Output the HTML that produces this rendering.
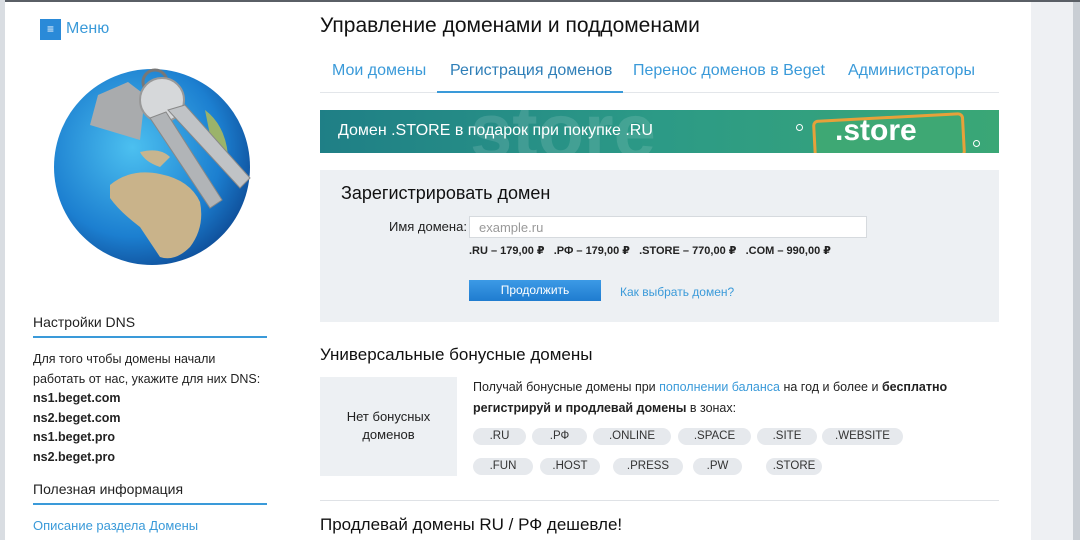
<!DOCTYPE html>
<html><head><meta charset="utf-8"><style>
*{margin:0;padding:0;box-sizing:border-box}
body{width:1080px;height:540px;overflow:hidden;background:#fff;font-family:"Liberation Sans","DejaVu Sans",sans-serif;color:#222;position:relative}
.a{position:absolute;white-space:nowrap}
.blue{color:#3a9ad9}
.tag{position:absolute;height:17px;background:#e6e9ed;border-radius:9px;font-size:11.5px;line-height:17px;text-align:center;color:#333}
</style></head><body>
<div class="a" style="left:0;top:0;width:1080px;height:2px;background:#5a5f66"></div>
<div class="a" style="left:0;top:0;width:5px;height:540px;background:#d9dde2"></div>
<div class="a" style="left:1031px;top:2px;width:42px;height:538px;background:#eef0f3"></div>
<div class="a" style="left:1073px;top:2px;width:7px;height:538px;background:#c9ced4"></div>

<div class="a" style="left:40px;top:19px;width:21px;height:21px;background:#2a8ad8;color:#fff;font-size:12px;line-height:21px;text-align:center">≡</div>
<div class="a blue" style="left:66px;top:20px;font-size:16px">Меню</div>

<svg class="a" style="left:40px;top:60px" width="230" height="215">
<defs><radialGradient id="g" cx="0.4" cy="0.4" r="0.65"><stop offset="0" stop-color="#4cc0f0"/><stop offset="0.7" stop-color="#1c7fd0"/><stop offset="1" stop-color="#0f4f9a"/></radialGradient></defs>
<circle cx="112" cy="107" r="98" fill="url(#g)"/>
<path d="M70 125 Q90 108 120 114 Q150 120 160 142 Q165 167 150 187 Q135 202 120 197 Q110 182 100 167 Q80 152 70 138Z" fill="#c9b38a"/>
<path d="M100 92 Q120 87 130 97 L120 107 Q105 102 100 92Z" fill="#c7b58f"/>
<path d="M165 50 Q185 65 188 95 L172 85Z" fill="#9bb36a"/>
<path d="M50 65 L58 35 L88 22 L105 35 L100 80 Z" fill="#a9abad"/>
<circle cx="115" cy="22" r="12" fill="none" stroke="#777" stroke-width="3"/>
<circle cx="122" cy="40" r="22" fill="#d6d8da" stroke="#999" stroke-width="2"/>
<path d="M128 50 L200 128 L210 118 L145 45Z" fill="#c0c3c6" stroke="#888"/>
<path d="M110 58 L170 148 L182 140 L126 52Z" fill="#b1b4b7" stroke="#888"/>
</svg>

<div class="a" style="left:33px;top:314px;font-size:14px;color:#222">Настройки DNS</div>
<div class="a" style="left:33px;top:336px;width:234px;height:2px;background:#3a9ad9"></div>
<div class="a" style="left:33px;top:350px;font-size:12.5px;line-height:19.5px">Для того чтобы домены начали<br>работать от нас, укажите для них DNS:<br><b>ns1.beget.com</b><br><b>ns2.beget.com</b><br><b>ns1.beget.pro</b><br><b>ns2.beget.pro</b></div>
<div class="a" style="left:33px;top:481px;font-size:14px">Полезная информация</div>
<div class="a" style="left:33px;top:503px;width:234px;height:2px;background:#3a9ad9"></div>
<div class="a blue" style="left:33px;top:518px;font-size:13px">Описание раздела Домены</div>

<div class="a" style="left:320px;top:14px;font-size:21px;color:#111">Управление доменами и поддоменами</div>
<div class="a blue" style="left:332px;top:62px;font-size:16px">Мои домены</div>
<div class="a" style="left:450px;top:62px;font-size:16px;color:#2f7fb8">Регистрация доменов</div>
<div class="a blue" style="left:633px;top:62px;font-size:16px">Перенос доменов в Beget</div>
<div class="a blue" style="left:848px;top:62px;font-size:16px">Администраторы</div>
<div class="a" style="left:320px;top:92px;width:679px;height:1px;background:#e3e6ea"></div>
<div class="a" style="left:437px;top:91px;width:186px;height:2px;background:#3a9ad9"></div>

<div class="a" style="left:320px;top:110px;width:679px;height:43px;background:linear-gradient(90deg,#1f7f86,#2c9a86 50%,#3aa776);overflow:hidden">
 <div class="a" style="left:150px;top:-22px;font-size:76px;font-weight:bold;color:rgba(255,255,255,0.12)">store</div>
 <div class="a" style="left:18px;top:12px;font-size:16px;color:#fff">Домен .STORE в подарок при покупке .RU</div>
 <div class="a" style="left:493px;top:6px;width:152px;height:45px;border:3px solid #e7a13a;border-radius:6px;background:#3ea874;transform:rotate(-3deg)"></div>
 <div class="a" style="left:515px;top:4px;font-size:30px;font-weight:bold;color:#fff">.store</div>
 <div class="a" style="left:476px;top:14px;width:7px;height:7px;border:1px solid #fff;border-radius:50%"></div>
 <div class="a" style="left:653px;top:30px;width:7px;height:7px;border:1px solid #fff;border-radius:50%"></div>
</div>

<div class="a" style="left:320px;top:170px;width:679px;height:152px;background:#edf0f3"></div>
<div class="a" style="left:341px;top:183px;font-size:18px;color:#111">Зарегистрировать домен</div>
<div class="a" style="left:389px;top:219px;font-size:13px">Имя домена:</div>
<div class="a" style="left:469px;top:216px;width:398px;height:22px;background:#fff;border:1px solid #d6dade;font-size:13px;color:#999;padding:3px 9px">example.ru</div>
<div class="a" style="left:469px;top:244px;font-size:11px;font-weight:bold">.RU – 179,00 ₽ &nbsp;&nbsp;.РФ – 179,00 ₽ &nbsp;&nbsp;.STORE – 770,00 ₽ &nbsp;&nbsp;.COM – 990,00 ₽</div>
<div class="a" style="left:469px;top:280px;width:132px;height:21px;background:linear-gradient(#3c9ae6,#1f7ccf);color:#fff;font-size:12px;line-height:21px;text-align:center">Продолжить</div>
<div class="a blue" style="left:620px;top:285px;font-size:12px">Как выбрать домен?</div>

<div class="a" style="left:320px;top:345px;font-size:17px;color:#111">Универсальные бонусные домены</div>
<div class="a" style="left:320px;top:377px;width:137px;height:99px;background:#edf0f3;font-size:13px;text-align:center;padding-top:31px;line-height:18px">Нет бонусных<br>доменов</div>
<div class="a" style="left:473px;top:377px;font-size:12.5px;line-height:21px">Получай бонусные домены при <span class="blue">пополнении баланса</span> на год и более и <b>бесплатно</b><br><b>регистрируй и продлевай домены</b> в зонах:</div>
<div class="tag" style="left:473px;top:428px;width:53px">.RU</div>
<div class="tag" style="left:532px;top:428px;width:55px">.РФ</div>
<div class="tag" style="left:593px;top:428px;width:78px">.ONLINE</div>
<div class="tag" style="left:678px;top:428px;width:73px">.SPACE</div>
<div class="tag" style="left:757px;top:428px;width:60px">.SITE</div>
<div class="tag" style="left:822px;top:428px;width:81px">.WEBSITE</div>
<div class="tag" style="left:473px;top:458px;width:60px">.FUN</div>
<div class="tag" style="left:540px;top:458px;width:60px">.HOST</div>
<div class="tag" style="left:613px;top:458px;width:70px">.PRESS</div>
<div class="tag" style="left:693px;top:458px;width:49px">.PW</div>
<div class="tag" style="left:766px;top:458px;width:56px">.STORE</div>
<div class="a" style="left:320px;top:500px;width:679px;height:1px;background:#dfe2e6"></div>
<div class="a" style="left:320px;top:515px;font-size:17px;color:#111">Продлевай домены RU / РФ дешевле!</div>
</body></html>
